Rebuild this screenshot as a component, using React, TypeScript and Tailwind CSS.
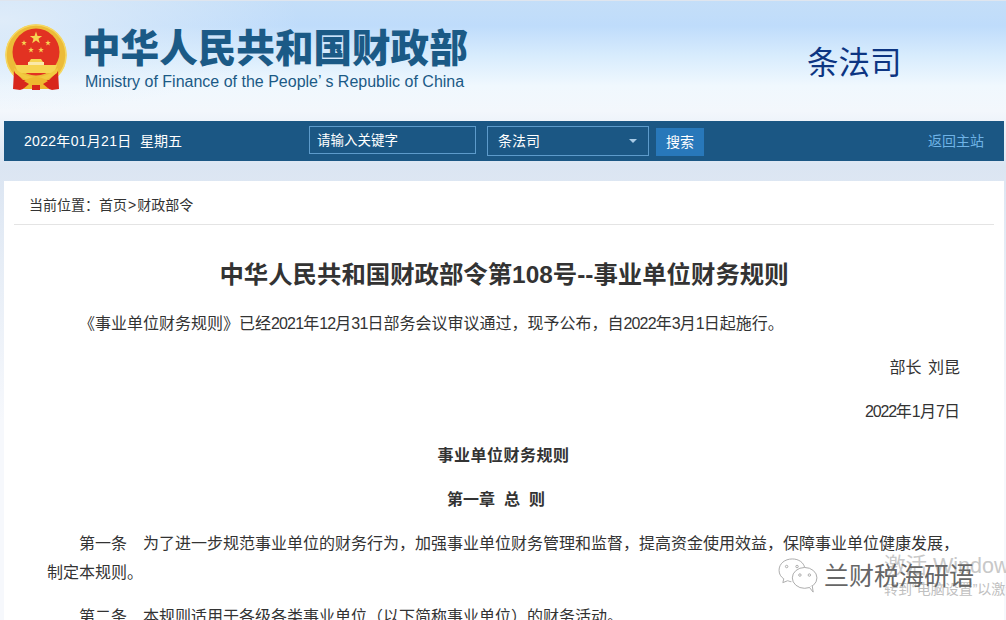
import React from 'react';

const bodyFont = "font-['Liberation_Sans','Noto_Sans_CJK_SC',sans-serif]";

const Star = ({ x, y, r }: { x: number; y: number; r: number }) => {
  const pts = Array.from({ length: 10 }, (_, i) => {
    const a = (Math.PI / 5) * i - Math.PI / 2;
    const d = i % 2 ? r * 0.4 : r;
    return `${x + d * Math.cos(a)},${y + d * Math.sin(a)}`;
  }).join(' ');
  return <polygon points={pts} fill="#f6d452" />;
};

const Emblem = () => (
  <svg width="62" height="67" viewBox="0 0 62 67" className="shrink-0">
    <circle cx="31" cy="31" r="30.5" fill="#ecbb38" />
    <circle cx="31" cy="31" r="30" fill="none" stroke="#f6d860" strokeWidth="1.5" />
    <circle cx="31" cy="28" r="23.5" fill="#e23222" />
    <Star x={31} y={14} r={6.5} />
    <Star x={19} y={19} r={3} />
    <Star x={43} y={19} r={3} />
    <Star x={26} y={26} r={3} />
    <Star x={36} y={26} r={3} />
    {/* gate */}
    <path d="M26 35 H36 L38 38 H24 Z" fill="#f6d452" />
    <path d="M23 38 H39 V41 H23 Z" fill="#fbe9a8" />
    <path d="M10 41 H52 L49 49 H13 Z" fill="#f6d452" />
    {/* ribbons */}
    <path d="M9 47 L8 65 L15 66 L24 63 L38 63 L47 66 L54 65 L53 47 L44 56 H18 Z" fill="#d8261c" />
    {/* lower ring and bow */}
    <path d="M9 44 Q31 62 53 44 L52 49 Q31 66 10 49 Z" fill="#f2c93f" />
    <path d="M19 57 Q31 49 43 57 L38 60 L44 65 H18 L24 60 Z" fill="#eeb92f" />
    <path d="M27 61 H35 V66 H27 Z" fill="#d8261c" />
  </svg>
);

const WeChatMark = () => (
  <svg width="40" height="36" viewBox="0 0 42 38" fill="none" stroke="#a8a8a8" strokeWidth="1">
    <path d="M15 1 C7 1 1 6 1 13 C1 17 3 20 6 22 L5 26 L10 24 C11 24 12 25 14 25" fill="#fff" />
    <path d="M15 1 C22 1 27 5 28 10" />
    <circle cx="9" cy="9" r="1.3" />
    <circle cx="20" cy="9" r="1.3" />
    <ellipse cx="28" cy="21" rx="13" ry="11" fill="#fff" />
    <path d="M33 31 L37 36 L36 29" fill="#fff" />
    <circle cx="23" cy="18" r="1.3" />
    <circle cx="33" cy="18" r="1.3" />
  </svg>
);

const P = ({ children, className = '' }: { children: React.ReactNode; className?: string }) => (
  <p className={`mb-[15px] leading-[29px] text-[16px] text-[#333] ${className}`}>{children}</p>
);

// the digits in the reference are narrower than Liberation's
const Num = ({ children }: { children: React.ReactNode }) => <span className="tracking-[-0.85px]">{children}</span>;

export default function App() {
  return (
    <div
      className={`relative h-[620px] w-[1006px] overflow-hidden border-t border-[#dfe5ee] bg-[radial-gradient(ellipse_300px_90px_at_0px_20px,#dfecf9_0%,rgba(223,236,249,0)_100%),linear-gradient(180deg,#c4def8_0px,#bfdcfb_25px,#d8ecfd_55px,#f0f8fe_85px,#f3f7fc_110px,#dbe5f2_165px,#e6edf6_260px,#f6f8fc_420px)] ${bodyFont}`}
    >
      {/* header */}
      <header className="flex h-[120px] items-start pl-[5px]">
        <div className="mt-[23px]">
          <Emblem />
        </div>
        <div className="ml-[15px] mt-[26px] w-[400px]">
          <div className="whitespace-nowrap text-[38.6px] font-black leading-[44px] text-[#1b5a86]">中华人民共和国财政部</div>
          <div className="ml-[3px] mt-[1px] whitespace-nowrap text-[16px] leading-[20px] text-[#1b5a86]">
            Ministry of Finance of the People’ s Republic of China
          </div>
        </div>
        <div className="ml-[325px] mt-[42px] whitespace-nowrap text-[31.5px] leading-[40px] text-[#0d3582]">条法司</div>
      </header>

      {/* nav bar */}
      <nav className="mx-[4px] flex h-[40px] w-[1000px] items-center bg-[#1b5784] text-[14px] text-white">
        <span className="ml-[20px] w-[116px] whitespace-nowrap tracking-[0.3px]">2022年01月21日</span>
        <span className="w-[169px] whitespace-nowrap">星期五</span>
        <div className="mb-[2px] flex h-[28px] w-[167px] items-center border border-[#5d9bcb] pl-[7px] pt-[2px] text-[13.5px]">请输入关键字</div>
        <div className="ml-[11px] flex h-[30px] w-[162px] items-center justify-between border border-[#5d9bcb] pl-[10px] pr-[11px]">
          <span>条法司</span>
          <span className="h-0 w-0 border-x-[4px] border-t-[4px] border-x-transparent border-t-[#a9cbe6]" />
        </div>
        <button className="ml-[7px] mt-[2px] h-[28px] w-[48px] bg-[#2878ba] text-[14px] text-white">搜索</button>
        <span className="ml-auto mr-[20px] whitespace-nowrap text-[#6fb3e6]">返回主站</span>
      </nav>

      {/* content card */}
      <main className="mx-[4px] mt-[20px] w-[1000px] bg-white pb-10">
        <div className="mx-[10px] flex h-[44px] items-end border-b border-[#e4e4e4] pb-[9px] pl-[15px] text-[14px] leading-[20px] text-[#333]">
          当前位置：首页<span className="mx-[1px]">&gt;</span>财政部令
        </div>
        <h1 className="mt-[30px] text-center text-[24.4px] font-bold leading-[40px] text-[#333]">
          中华人民共和国财政部令第108号--事业单位财务规则
        </h1>
        <div className="ml-[43px] mr-[44px] mt-[14px]">
          <P className="indent-[32px]">
            《事业单位财务规则》已经<Num>2021</Num>年<Num>12</Num>月<Num>31</Num>日部务会议审议通过，现予公布，自<Num>2022</Num>年<Num>3</Num>月<Num>1</Num>日起施行。
          </P>
          <P className="text-right">
            部长 <span className="ml-[2px]">刘昆</span>
          </P>
          <P className="text-right">
            <span className="tracking-[-1.2px]">2022</span>年<Num>1</Num>月<Num>7</Num>日
          </P>
          <P className="text-center font-bold tracking-[0.5px]">事业单位财务规则</P>
          <P className="pr-[15px] text-center font-bold">第一章&nbsp;&nbsp;总&nbsp;&nbsp;则</P>
          <P className="indent-[32px]">
            第一条　为了进一步规范事业单位的财务行为，加强事业单位财务管理和监督，提高资金使用效益，保障事业单位健康发展，制定本规则。
          </P>
          <P className="indent-[32px]">第二条　本规则适用于各级各类事业单位（以下简称事业单位）的财务活动。</P>
        </div>
      </main>

      {/* watermark overlays */}
      <div className="absolute left-[884px] top-[552px] whitespace-nowrap text-[21.5px] leading-[26px] text-[#c8c8c8]">激活 Windows</div>
      <div className="absolute left-[884px] top-[579px] whitespace-nowrap text-[14px] leading-[18px] text-[#c0c0c0]">转到“电脑设置”以激活</div>
      <div className="absolute left-[778px] top-[557px] flex items-center gap-[6px]">
        <WeChatMark />
        <span className="whitespace-nowrap text-[25px] leading-[36px] text-[#666]">兰财税海研语</span>
      </div>
    </div>
  );
}
